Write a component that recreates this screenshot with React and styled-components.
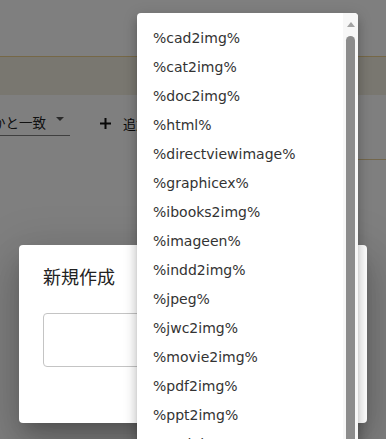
import React from 'react';
import styled, { createGlobalStyle } from 'styled-components';

const Global = createGlobalStyle`
  html, body { margin: 0; padding: 0; }
  body {
    width: 386px;
    height: 439px;
    overflow: hidden;
    background: #fff;
    font-family: "Noto Sans CJK JP", "DejaVu Sans", sans-serif;
    color: #222;
  }
`;

const Page = styled.div`
  position: relative;
  width: 386px;
  height: 439px;
  overflow: hidden;
  background: #fff;
  padding-top: 56px;
  box-sizing: border-box;
`;

const Banner = styled.div`
  height: 38px;
  border-top: 1px solid #ecd08e;
  background: #f2eee0;
`;

const Toolbar = styled.div`
  display: flex;
  align-items: flex-start;
  height: 64px;
  padding-top: 13px;
  box-sizing: border-box;
`;

const Divider = styled.div`
  height: 1px;
  margin-left: 140px;
  background: #e6cf98;
`;

const Select = styled.div`
  position: relative;
  width: 70px;
  height: 28px;
  box-sizing: border-box;
  border-bottom: 1px solid rgba(0, 0, 0, 0.5);
  display: flex;
  align-items: center;
  font-size: 13.5px;
  color: #222;
  white-space: nowrap;
`;

const SelectValue = styled.span`
  margin-left: -8px;
`;

const Caret = styled.span`
  position: absolute;
  left: 56px;
  top: 9px;
  width: 0;
  height: 0;
  border-left: 4px solid transparent;
  border-right: 4px solid transparent;
  border-top: 4px solid #555;
`;

const AddButton = styled.div`
  display: flex;
  align-items: center;
  gap: 12px;
  margin-left: 30px;
  margin-top: 6px;
  font-size: 13px;
  color: #111;
`;

const Backdrop = styled.div`
  position: absolute;
  inset: 0;
  background: rgba(0, 0, 0, 0.5);
  display: flex;
  justify-content: center;
  align-items: flex-start;
  padding-top: 245px;
  box-sizing: border-box;
`;

const Dialog = styled.div`
  width: 348px;
  height: 178px;
  background: #fff;
  border-radius: 4px;
  box-sizing: border-box;
  padding: 20px 24px;
  box-shadow: 0 11px 15px -7px rgba(0, 0, 0, 0.2), 0 24px 38px 3px rgba(0, 0, 0, 0.14),
    0 9px 46px 8px rgba(0, 0, 0, 0.12);
`;

const Title = styled.div`
  font-size: 18px;
  line-height: 22px;
  color: #222;
`;

const Input = styled.div`
  margin-top: 26px;
  height: 54px;
  border: 1px solid #c4c4c4;
  border-radius: 4px;
  box-sizing: border-box;
`;

const Menu = styled.div`
  position: absolute;
  left: 137px;
  top: 13px;
  width: 221px;
  height: 440px;
  background: #fff;
  border-radius: 4px;
  overflow: hidden;
  display: flex;
  box-shadow: 0 5px 5px -3px rgba(0, 0, 0, 0.2), 0 8px 10px 1px rgba(0, 0, 0, 0.14),
    0 3px 14px 2px rgba(0, 0, 0, 0.12);
`;

const List = styled.ul`
  flex: 1;
  margin: 0;
  padding: 11px 0 0;
  list-style: none;
`;

const Item = styled.li`
  height: 29px;
  line-height: 29px;
  padding-left: 16px;
  font-family: "DejaVu Sans", sans-serif;
  font-size: 14px;
  color: #333;
  white-space: nowrap;
`;

const Scrollbar = styled.div`
  width: 15px;
  background: #f7f7f7;
  display: flex;
  flex-direction: column;
  align-items: flex-start;
`;

const UpArrow = styled.div`
  margin: 9px 0 0 4px;
  width: 0;
  height: 0;
  border-left: 4px solid transparent;
  border-right: 4px solid transparent;
  border-bottom: 5px solid #a3a3a3;
`;

const Thumb = styled.div`
  margin: 9px 0 0 3px;
  width: 9px;
  flex: 1;
  background: #8c8c8c;
  border-radius: 4.5px 4.5px 0 0;
`;

const items = [
  '%cad2img%',
  '%cat2img%',
  '%doc2img%',
  '%html%',
  '%directviewimage%',
  '%graphicex%',
  '%ibooks2img%',
  '%imageen%',
  '%indd2img%',
  '%jpeg%',
  '%jwc2img%',
  '%movie2img%',
  '%pdf2img%',
  '%ppt2img%',
  '%psd2img%',
];

export default function App() {
  return (
    <>
      <Global />
      <Page>
        <Banner />
        <Toolbar>
          <Select>
            <SelectValue>かと一致</SelectValue>
            <Caret />
          </Select>
          <AddButton>
            <svg width="11" height="11" viewBox="0 0 11 11">
              <path d="M5.5 0v11M0 5.5h11" stroke="#111" strokeWidth="2" />
            </svg>
            追加
          </AddButton>
        </Toolbar>
        <Divider />
        <Backdrop>
          <Dialog>
            <Title>新規作成</Title>
            <Input />
          </Dialog>
        </Backdrop>
        <Menu>
          <List>
            {items.map((t) => (
              <Item key={t}>{t}</Item>
            ))}
          </List>
          <Scrollbar>
            <UpArrow />
            <Thumb />
          </Scrollbar>
        </Menu>
      </Page>
    </>
  );
}
